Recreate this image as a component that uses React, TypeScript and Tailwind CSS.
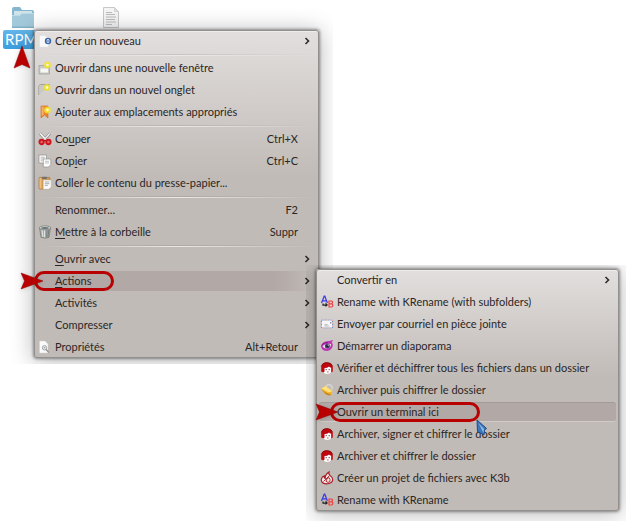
import type { ReactNode } from 'react';
import clsx from 'clsx';

type Entry = {
  label: string;
  accel?: number; // index of the underlined letter
  shortcut?: string;
  icon?: ReactNode;
  submenu?: boolean;
  active?: boolean;
  mark?: 'short' | 'long';
};

const Icon = ({ children }: { children: ReactNode }) => (
  <svg viewBox="0 0 14 14" className="size-3.5" aria-hidden="true">{children}</svg>
);

const Spark = ({ x, y }: { x: number; y: number }) => (
  <g>
    <circle cx={x} cy={y} r="3.6" fill="#f2e640" opacity=".7" />
    <circle cx={x} cy={y} r="2.6" fill="#efdf1c" />
    <circle cx={x} cy={y} r="1.4" fill="#fffcc8" />
  </g>
);

const NewIcon = () => (
  <Icon>
    <path d="M1.500 1.500h5l4 3v8.500h-9z" fill="#f8f9fb" stroke="#dcdcdc" strokeWidth=".5" />
    <circle cx="10" cy="7" r="3.200" fill="#3a66a8" />
    <path d="M8 6.500L10 4.800l2 1.700zM8 7.600l2 1.700 2-1.700z" fill="#dfe9f6" />
  </Icon>
);

const WindowIcon = () => (
  <Icon>
    <path d="M1 4.500h10.500v8.500H1z" fill="#c9c9c5" stroke="#9d9d97" strokeWidth=".7" />
    <path d="M2.500 7.500h7.500v4H2.500z" fill="#f6f6f4" />
    <Spark x={9.5} y={4} />
  </Icon>
);

const TabIcon = () => (
  <Icon>
    <path d="M.8 12V4Q.8 1.500 3 1.500h9" fill="none" stroke="#a3a29b" />
    <path d="M1.300 12V4Q1.300 2 3.500 2H10v6H6q-3 0-3.500 4z" fill="#c9c8c2" />
    <Spark x={9} y={4.5} />
  </Icon>
);

const BookmarkIcon = () => (
  <Icon>
    <path d="M3 1h7v12l-3.500-3L3 13z" fill="#ee8428" stroke="#cd6a1a" strokeWidth=".6" />
    <path d="M3.600 1.500h2v8l-2 1.600z" fill="#f9b066" />
    <Spark x={9.5} y={5} />
  </Icon>
);

const CutIcon = () => (
  <Icon>
    <path d="M2 1.500L8.500 8.500" stroke="#8b8b8b" strokeWidth="2.600" />
    <path d="M12 1.500L5.500 8.500" stroke="#8b8b8b" strokeWidth="2.600" />
    <path d="M2.200 1.500L8.500 8.500" stroke="#fafafa" strokeWidth="1.500" />
    <path d="M11.800 1.500L5.500 8.500" stroke="#e9e9e9" strokeWidth="1.500" />
    <circle cx="3.600" cy="10" r="2.200" fill="#e0666a" stroke="#d0161d" strokeWidth="1.900" />
    <circle cx="10.400" cy="10" r="2.200" fill="#e0666a" stroke="#d0161d" strokeWidth="1.900" />
    <path d="M5.500 8.500h3" stroke="#b5191d" strokeWidth="1.400" />
  </Icon>
);

const CopyIcon = () => (
  <Icon>
    <rect x="1" y="1" width="7.500" height="8" fill="#f8f8f8" stroke="#92928e" strokeWidth=".7" />
    <path d="M2.700 3.300h4M2.700 5h4M2.700 6.700h2" stroke="#a5a5a5" strokeWidth=".7" />
    <path d="M5.300 5h7.500v5.500L10.500 13H5.300z" fill="#fdfdfd" stroke="#92928e" strokeWidth=".7" />
    <path d="M7 7.300h4M7 9h4" stroke="#a5a5a5" strokeWidth=".7" />
  </Icon>
);

const PasteIcon = () => (
  <Icon>
    <rect x="1" y="1.400" width="11" height="11.600" rx=".8" fill="#d3974b" stroke="#a56a24" strokeWidth=".6" />
    <path d="M1.500 2h2v10.500h-2z" fill="#efc07a" />
    <rect x="4" y=".7" width="5" height="2.300" rx=".6" fill="#77736c" />
    <path d="M5.200 4h7.900v7.200L11 13.300H5.200z" fill="#fafafa" stroke="#b5b2ac" strokeWidth=".5" />
    <path d="M6.800 6h4.600M6.800 7.700h4.600M6.800 9.400h3" stroke="#8c8c8c" strokeWidth=".7" />
  </Icon>
);

const TrashIcon = () => (
  <Icon>
    <path d="M1.500 2.800h11L11 12.400q-4 1.600-8 0z" fill="#a4a9a8" stroke="#666b6a" strokeWidth=".6" />
    <path d="M4 5l.8 7M6.500 5.300v7" stroke="#dfe3e2" strokeWidth="1.100" />
    <path d="M9 5.200l-.3 7M10.800 5l-.8 7" stroke="#6c7271" strokeWidth=".8" />
    <ellipse cx="7" cy="2.800" rx="5.700" ry="1.900" fill="#dfe3e2" stroke="#6c7271" strokeWidth=".7" />
    <ellipse cx="7" cy="3" rx="3.900" ry=".9" fill="#6b7170" />
  </Icon>
);

const PropertiesIcon = () => (
  <Icon>
    <path d="M1.500 1h5.500l3 3v9H1.500z" fill="#fafafa" stroke="#d2d0ce" strokeWidth=".5" />
    <circle cx="6.500" cy="7.800" r="2.200" fill="#e6eaec" stroke="#9ba0a3" strokeWidth=".9" />
    <path d="M8.100 9.400l2.800 3" stroke="#96948f" strokeWidth="1.400" />
    <path d="M5.700 7.800h1.600" stroke="#777" strokeWidth=".7" />
  </Icon>
);

const RenameIcon = () => (
  <Icon>
    <path d="M1.500 8L4.200 1.200h.6L7.400 8M2.400 5.800h4" fill="none" stroke="#3a3ae4" strokeWidth="1.200" />
    <path d="M3 8.500v1.600h3.500" fill="none" stroke="#222" strokeWidth="1.200" />
    <path d="M5.500 7.600L8 10l-2.500 2z" fill="#222" />
    <path d="M9 6h2.200q1.500.2 1.300 1.600-.2 1.200-1.300 1.300H9zM9 8.900h2.400q1.600.3 1.500 1.700-.2 1.300-1.600 1.400H9z" fill="none" stroke="#ee4040" strokeWidth="1.200" />
  </Icon>
);

const MailIcon = () => (
  <Icon>
    <rect x="1" y="2.500" width="12" height="9" fill="#f6f6f6" />
    <rect x="1.400" y="3" width="11.200" height="8" fill="none" stroke="#6b8fc4" strokeDasharray="1.500 1.500" />
    <rect x="1.400" y="3" width="11.200" height="8" fill="none" stroke="#d98b8b" strokeDasharray="1 2" strokeDashoffset="1.250" />
    <path d="M4.500 7.600h3M4.500 9h4.600" stroke="#a0a0a0" strokeWidth=".7" />
    <path d="M10 5h1.400v1.600H10z" fill="#7a8fa8" />
  </Icon>
);

const EyeIcon = () => (
  <Icon>
    <path d="M1 7.500Q2 2.500 7 2.300q3.600-.2 6-1.300-.5 1.600-1.300 2.300 1.500 1.600 1 4Q11.500 11.500 7 12 2 12 1 7.500z" fill="#bf35b6" />
    <path d="M2.600 7.500Q5 3.800 11.200 5 10.500 9.600 6.500 9.600 4 9.500 2.600 7.500z" fill="#ecdff0" />
    <circle cx="7.400" cy="7" r="2.500" fill="#4a4468" />
    <circle cx="7.400" cy="7" r="1.100" fill="#111" />
    <circle cx="8.200" cy="6.200" r=".6" fill="#fff" />
    <path d="M1.300 6.500Q3 3.500 8 3.400" fill="none" stroke="#6d1474" strokeWidth=".7" />
  </Icon>
);

const KgpgIcon = () => (
  <Icon>
    <path d="M3.500 5.500h8V11q-1.500 2-4.500 1.900-2.500-.2-3.500-2z" fill="#fdfbfb" />
    <path d="M1.200 10.500V6Q1.500 1.600 6.500 1.500q6-.1 6.300 5v4l-1.600 1V6.800Q9.500 6.500 9 5.500 7.500 7 4.500 7v3.800q-1.500 1-3.300-.3z" fill="#bf0710" />
    <path d="M1.300 5.500Q2.500 1.700 6.500 1.500q5 0 6.200 4" fill="none" stroke="#7c0308" strokeWidth=".8" />
    <path d="M6.200 8v1.200M9.200 8v1.200" stroke="#333" strokeWidth=".9" />
    <path d="M7 11h1.600" stroke="#c4060e" strokeWidth=".7" />
  </Icon>
);

const LockIcon = () => (
  <Icon>
    <path d="M6 3.500Q8 .5 10.500 2q2.500 1.600 1.200 4.500" fill="none" stroke="#d4d4d4" strokeWidth="1.600" />
    <path d="M1.300 5.500L5.500 3l7 5.300-2.300 4.200q-5.500 0-8.900-7z" fill="#f3b62a" />
    <path d="M1.300 5.500L5.500 3l7 5.300-4 .9z" fill="#ffe27c" />
    <path d="M1.300 5.500q3.500 6.800 8.900 7l.6-1.300Q5.500 10.500 1.300 5.500z" fill="#c97f12" />
  </Icon>
);

const K3bIcon = () => (
  <Icon>
    <path d="M6 12.800Q1 12.500 1.300 8.300 1.700 5.500 4.300 4.800 3.800 7 5.200 7.300 5 3.500 9 1 8.500 3.300 10.300 4.800 13 6.500 12.700 9.200 12 13 6 12.800z" fill="#f1e9e7" stroke="#a8222b" strokeWidth="1.200" />
    <path d="M3.500 10.500l6-6M6 10.300Q6.500 7 9 6.500q1.800 2 .8 4.200Q8 12.300 6 10.300z" fill="none" stroke="#b8303a" strokeWidth="1" />
  </Icon>
);

// groups are parted by an engraved line
const MAIN: Entry[][] = [
  [{ label: 'Créer un nouveau', icon: <NewIcon />, submenu: true }],
  [
    { label: 'Ouvrir dans une nouvelle fenêtre', icon: <WindowIcon /> },
    { label: 'Ouvrir dans un nouvel onglet', icon: <TabIcon /> },
    { label: 'Ajouter aux emplacements appropriés', icon: <BookmarkIcon /> },
  ],
  [
    { label: 'Couper', accel: 2, shortcut: 'Ctrl+X', icon: <CutIcon /> },
    { label: 'Copier', accel: 3, shortcut: 'Ctrl+C', icon: <CopyIcon /> },
    { label: 'Coller le contenu du presse-papier...', icon: <PasteIcon /> },
  ],
  [
    { label: 'Renommer...', shortcut: 'F2' },
    { label: 'Mettre à la corbeille', accel: 0, shortcut: 'Suppr', icon: <TrashIcon /> },
  ],
  [
    { label: 'Ouvrir avec', accel: 0, submenu: true },
    { label: 'Actions', accel: 0, submenu: true, active: true, mark: 'short' },
    { label: 'Activités', submenu: true },
    { label: 'Compresser', submenu: true },
    { label: 'Propriétés', shortcut: 'Alt+Retour', icon: <PropertiesIcon /> },
  ],
];

const ACTIONS: Entry[][] = [
  [
    { label: 'Convertir en', submenu: true },
    { label: 'Rename with KRename (with subfolders)', icon: <RenameIcon /> },
    { label: 'Envoyer par courriel en pièce jointe', icon: <MailIcon /> },
    { label: 'Démarrer un diaporama', icon: <EyeIcon /> },
    { label: 'Vérifier et déchiffrer tous les fichiers dans un dossier', icon: <KgpgIcon /> },
    { label: 'Archiver puis chiffrer le dossier', icon: <LockIcon /> },
    { label: 'Ouvrir un terminal ici', active: true, mark: 'long' },
    { label: 'Archiver, signer et chiffrer le dossier', icon: <KgpgIcon /> },
    { label: 'Archiver et chiffrer le dossier', icon: <KgpgIcon /> },
    { label: 'Créer un projet de fichiers avec K3b', icon: <K3bIcon /> },
    { label: 'Rename with KRename', icon: <RenameIcon /> },
  ],
];

function Pointer({ className }: { className?: string }) {
  return (
    <svg viewBox="0 0 24 18" className={clsx('absolute h-[18px] w-6 drop-shadow-sm', className)} aria-hidden="true">
      <path d="M1 1L23 9 1 17 4.500 9z" fill="#b90000" stroke="#8e0000" strokeWidth=".5" />
    </svg>
  );
}

function Mark({ kind }: { kind: 'short' | 'long' }) {
  return (
    <>
      <span
        className={clsx(
          'pointer-events-none absolute inset-y-0 my-px rounded-full border-3 border-[#b90000]',
          kind === 'short' ? 'left-0 w-20' : 'left-3.5 w-[150px]',
        )}
      />
      <Pointer className={kind === 'short' ? '-left-3.5 top-0.5' : '-left-px top-0.5'} />
    </>
  );
}

function Label({ text, accel }: { text: string; accel?: number }) {
  if (accel === undefined) return <span>{text}</span>;
  return (
    <span>
      {text.slice(0, accel)}
      <u className="underline-offset-2">{text[accel]}</u>
      {text.slice(accel + 1)}
    </span>
  );
}

function Row({ item }: { item: Entry }) {
  return (
    <button
      role="menuitem"
      className="relative flex h-[22px] w-full items-center px-1 text-left leading-[22px] whitespace-nowrap"
    >
      {item.active && (
        <span
          className={clsx(
            'absolute inset-x-[3px] inset-y-px rounded-[3px]',
            item.submenu
              ? 'bg-linear-to-r from-[#b2a8a5] from-85% to-transparent'
              : 'border-t border-b border-t-[#a29a97] border-b-[#d0cbc8] bg-[#b2a8a5]',
          )}
        />
      )}
      <span className="relative mr-[3px] size-3.5 shrink-0">{item.icon}</span>
      <span className="relative flex-1">
        <Label text={item.label} accel={item.accel} />
      </span>
      {item.shortcut && <span className="mr-[17px]">{item.shortcut}</span>}
      {item.submenu && (
        <svg viewBox="0 0 8 8" className="relative mr-1 size-2" aria-hidden="true">
          <path d="M2.500 1L5.500 4 2.500 7" fill="none" stroke="#2f2b29" strokeWidth="1.600" />
        </svg>
      )}
      {item.mark && <Mark kind={item.mark} />}
    </button>
  );
}

function Menu({ groups, label, className }: { groups: Entry[][]; label: string; className?: string }) {
  return (
    <div
      role="menu"
      aria-label={label}
      className={clsx(
        'absolute rounded-[3px] bg-linear-to-b from-[#e2dfde] to-[#c1bbb7] to-45% text-[11px] text-[#2b2624]',
        'shadow-[inset_0_0_0_1px_#92908e,inset_0_2px_0_#efedec,0_0_3px_1px_rgba(0,0,0,.4),0_2px_22px_2px_rgba(0,0,0,.26)]',
        className,
      )}
    >
      {groups.map((group, i) => (
        <div key={group[0].label}>
          {i > 0 && (
            <div role="separator" className="flex h-[5px] flex-col justify-center px-1">
              <div className="h-px bg-linear-to-r from-transparent via-black/10 to-transparent" />
              <div className="h-px bg-linear-to-r from-transparent via-[#ebe8e6] to-transparent" />
            </div>
          )}
          {group.map((item) => (
            <Row key={item.label} item={item} />
          ))}
        </div>
      ))}
    </div>
  );
}

function Desktop() {
  return (
    <div className="flex items-start gap-[60px] px-[3px] pt-1.5">
      <figure className="flex flex-col items-start">
        <svg viewBox="0 0 24 22" className="ml-2 h-[22px] w-6" aria-hidden="true">
          <path d="M1 3Q1 1 3 1h6l2 3h10q2 0 2 2v14H1z" fill="#84b7cf" />
          <rect x="3" y="5" width="18" height="9" fill="#d0e2ea" />
          <path d="M1 9h8l2-2h12v14q0 1-1 1H2q-1 0-1-1z" fill="#a3cadb" />
          <path d="M1 9.500h8l2-2h12" fill="none" stroke="#bddbe7" />
          <path d="M1 20.500h22V22H1z" fill="#82b2c8" />
        </svg>
        <figcaption className="mt-0.5 h-[19px] w-10 rounded-xs bg-linear-to-b from-[#62b6ea] to-[#3a9fe0] pl-0.5 text-[15px] leading-[19px] text-white">
          RPM
        </figcaption>
      </figure>
      <svg viewBox="0 0 16 22" className="h-[22px] w-4" aria-hidden="true">
        <path d="M.5 1.500h11l4 4v16H.5z" fill="#f5f5f5" stroke="#c8c8c8" />
        <path d="M11.500 1.500v4h4z" fill="#dedede" stroke="#c4c4c4" strokeWidth=".5" />
        <path d="M3 6.500h6M3 8.500h9M3 11h10M3 13.500h9M3 16h10M3 18.500h6" stroke="#bdbdbd" />
      </svg>
    </div>
  );
}

export default function App() {
  return (
    <main className="relative min-h-screen overflow-hidden bg-white font-['Lato','Open_Sans',sans-serif]">
      <section className="absolute top-0 left-0 h-[364px] w-[333px] overflow-hidden">
        <Desktop />
        <Menu groups={MAIN} label="Dossier RPM" className="top-[30px] left-[34px] w-[285px]" />
        <Pointer className="top-12 left-2.5 -rotate-90" />
      </section>

      <section className="absolute top-[265px] left-[306px] h-64 w-80 overflow-hidden">
        <Menu groups={ACTIONS} label="Actions" className="top-1 left-2.5 w-[303px]" />
        <svg viewBox="0 0 12 18" className="absolute top-[154px] left-[170px] h-[18px] w-3" aria-hidden="true">
          <path d="M1 1l9.500 8.500-2 1.500-.5 5-6.500-3.500z" fill="#3d78bd" stroke="#1e4a85" />
          <path d="M2.500 4l5.500 6-.5 4z" fill="#8ebbe6" />
        </svg>
      </section>
    </main>
  );
}
